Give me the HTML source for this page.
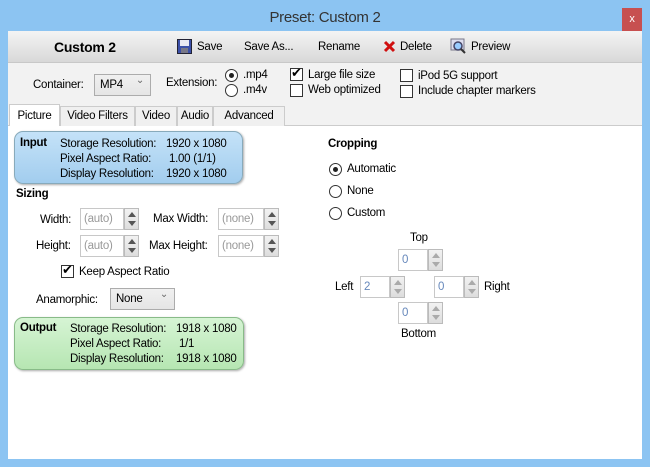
<!DOCTYPE html><html><head><style>
*{box-sizing:border-box;margin:0;padding:0}
body{width:650px;height:467px;background:#8cc4f2;font-family:"Liberation Sans",sans-serif;font-size:11.5px;letter-spacing:-0.25px;color:#000;position:relative;overflow:hidden}
.a{position:absolute;white-space:nowrap}
.in{position:absolute;border:1px solid #c8c8c8;background:#fff;color:#999;padding:4px 0 0 3px;height:22px;white-space:nowrap}
.sp{position:absolute;width:15px;height:22px;border:1px solid #bbb;background:linear-gradient(#f2f2f2,#ddd)}
.sp:before{content:"";position:absolute;left:3px;top:3px;border:4px solid transparent;border-bottom:5px solid #555;border-top:0}
.sp:after{content:"";position:absolute;left:3px;bottom:3px;border:4px solid transparent;border-top:5px solid #555;border-bottom:0}
.sp.l:before{border-bottom-color:#aaa}.sp.l:after{border-top-color:#aaa}
.cb{position:absolute;width:13px;height:13px;border:1px solid #333;background:#fff}
.rb{position:absolute;width:13px;height:13px;border:1px solid #333;border-radius:50%;background:#fff}
.rb.on:after{content:"";position:absolute;left:3px;top:3px;width:5px;height:5px;border-radius:50%;background:#222}
.tab{position:absolute;top:106px;height:20px;border:1px solid #ccc;border-bottom:none;background:#f0f0f0;padding:3px 0 0;text-align:center;white-space:nowrap;overflow:hidden}
.dd{position:absolute;border:1px solid #acacac;background:linear-gradient(#f0f0f0,#e5e5e5);padding:4px 0 0 5px;height:22px}
.dd:after{content:"⌄";position:absolute;right:6px;top:0px;font-size:10px;color:#666}
</style></head><body>
<div class="a" style="left:0;top:9px;width:650px;text-align:center;font-size:15px;color:#333;letter-spacing:-0.3px">Preset: Custom 2</div>
<div class="a" style="left:622px;top:8px;width:20px;height:23px;background:#c75050;color:#fff;text-align:center;font-size:11px;line-height:22px">x</div>
<div class="a" style="left:8px;top:31px;width:634px;height:428px;background:#f2f2f2"></div>
<div class="a" style="left:8px;top:31px;width:634px;height:32px;background:linear-gradient(#f4f4f4,#d8d8d8);border-bottom:1px solid #c8c8c8"></div>
<div class="a" style="left:54px;top:39px;font-size:14px;font-weight:bold">Custom 2</div>
<svg class="a" style="left:177px;top:39px" width="15" height="15"><rect x="0.5" y="0.5" width="14" height="14" fill="#3b4fa8" stroke="#223"/><rect x="3" y="1" width="9" height="6" fill="#e8e8f4"/><rect x="4" y="9" width="7" height="5" fill="#778"/></svg>
<div class="a" style="left:197px;top:41px">Save</div>
<div class="a" style="left:244px;top:41px">Save As...</div>
<div class="a" style="left:318px;top:41px">Rename</div>
<svg class="a" style="left:383px;top:40px" width="13" height="13"><path d="M2 2L11 11M11 2L2 11" stroke="#d01010" stroke-width="3"/></svg>
<div class="a" style="left:400px;top:41px">Delete</div>
<svg class="a" style="left:450px;top:38px" width="16" height="16"><rect x="1" y="1" width="13" height="11" fill="#dde" stroke="#778"/><circle cx="8" cy="8" r="4" fill="#9cf" stroke="#446" stroke-width="1.5"/><path d="M11 11L15 15" stroke="#333" stroke-width="2"/></svg>
<div class="a" style="left:471px;top:41px">Preview</div>
<div class="a" style="left:33px;top:79px">Container:</div>
<div class="dd" style="left:94px;top:74px;width:57px">MP4</div>
<div class="a" style="left:166px;top:77px">Extension:</div>
<div class="rb on" style="left:225px;top:69px"></div><div class="a" style="left:243px;top:69px">.mp4</div>
<div class="rb" style="left:225px;top:84px"></div><div class="a" style="left:243px;top:84px">.m4v</div>
<div class="cb" style="left:290px;top:68px"></div><div class="a" style="left:291px;top:65px;font-size:13px">✔</div><div class="a" style="left:308px;top:69px">Large file size</div>
<div class="cb" style="left:290px;top:84px"></div><div class="a" style="left:308px;top:84px">Web optimized</div>
<div class="cb" style="left:400px;top:69px"></div><div class="a" style="left:418px;top:70px">iPod 5G support</div>
<div class="cb" style="left:400px;top:85px"></div><div class="a" style="left:418px;top:85px">Include chapter markers</div>
<div class="a" style="left:8px;top:125px;width:634px;height:334px;background:#fff;border-top:1px solid #ccc"></div>
<div class="tab" style="left:9px;top:104px;height:22px;background:#fff;width:51px;padding-top:5px">Picture</div>
<div class="tab" style="left:60px;width:75px">Video Filters</div>
<div class="tab" style="left:135px;width:42px">Video</div>
<div class="tab" style="left:177px;width:36px">Audio</div>
<div class="tab" style="left:213px;width:72px">Advanced</div>
<div class="a" style="left:14px;top:131px;width:229px;height:53px;border:1px solid #8ab;border-radius:9px;background:linear-gradient(#c4e2f8,#a2cdee);box-shadow:1px 1px 2px #aaa"></div>
<div class="a" style="left:20px;top:137px;font-weight:bold">Input</div>
<div class="a" style="left:60px;top:137px;line-height:15px">Storage Resolution:<br>Pixel Aspect Ratio:<br>Display Resolution:</div>
<div class="a" style="left:166px;top:137px;line-height:15px">1920 x 1080<br>&nbsp;1.00 (1/1)<br>1920 x 1080</div>
<div class="a" style="left:16px;top:188px;font-weight:bold">Sizing</div>
<div class="a" style="left:40px;top:214px">Width:</div>
<div class="in" style="left:80px;top:208px;width:44px">(auto)</div><div class="sp" style="left:124px;top:208px"></div>
<div class="a" style="left:153px;top:213px">Max Width:</div>
<div class="in" style="left:218px;top:208px;width:46px">(none)</div><div class="sp" style="left:264px;top:208px"></div>
<div class="a" style="left:36px;top:240px">Height:</div>
<div class="in" style="left:80px;top:235px;width:44px">(auto)</div><div class="sp" style="left:124px;top:235px"></div>
<div class="a" style="left:149px;top:240px">Max Height:</div>
<div class="in" style="left:218px;top:235px;width:46px">(none)</div><div class="sp" style="left:264px;top:235px"></div>
<div class="cb" style="left:61px;top:265px"></div><div class="a" style="left:62px;top:262px;font-size:13px">✔</div><div class="a" style="left:79px;top:266px">Keep Aspect Ratio</div>
<div class="a" style="left:36px;top:294px">Anamorphic:</div>
<div class="dd" style="left:110px;top:288px;width:65px">None</div>
<div class="a" style="left:14px;top:317px;width:230px;height:53px;border:1px solid #8b8;border-radius:9px;background:linear-gradient(#d6f4d4,#b6e6b2);box-shadow:1px 1px 2px #aaa"></div>
<div class="a" style="left:20px;top:322px;font-weight:bold">Output</div>
<div class="a" style="left:70px;top:322px;line-height:15px">Storage Resolution:<br>Pixel Aspect Ratio:<br>Display Resolution:</div>
<div class="a" style="left:176px;top:322px;line-height:15px">1918 x 1080<br>&nbsp;1/1<br>1918 x 1080</div>
<div class="a" style="left:328px;top:138px;font-weight:bold">Cropping</div>
<div class="rb on" style="left:329px;top:163px"></div><div class="a" style="left:347px;top:163px">Automatic</div>
<div class="rb" style="left:329px;top:185px"></div><div class="a" style="left:347px;top:185px">None</div>
<div class="rb" style="left:329px;top:207px"></div><div class="a" style="left:347px;top:207px">Custom</div>
<div class="a" style="left:410px;top:232px">Top</div>
<div class="in" style="left:398px;top:249px;width:30px;color:#6688bb">0</div><div class="sp l" style="left:428px;top:249px"></div>
<div class="a" style="left:335px;top:281px">Left</div>
<div class="in" style="left:360px;top:276px;width:30px;color:#6688bb">2</div><div class="sp l" style="left:390px;top:276px"></div>
<div class="in" style="left:434px;top:276px;width:30px;color:#6688bb">0</div><div class="sp l" style="left:464px;top:276px"></div>
<div class="a" style="left:484px;top:281px">Right</div>
<div class="in" style="left:398px;top:302px;width:30px;color:#6688bb">0</div><div class="sp l" style="left:428px;top:302px"></div>
<div class="a" style="left:401px;top:328px">Bottom</div>
</body></html>
